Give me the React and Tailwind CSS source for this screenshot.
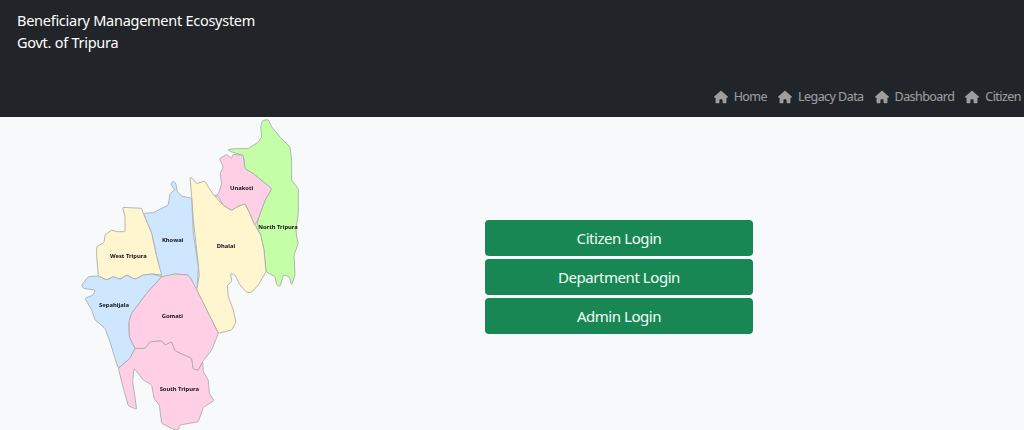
import React from "react";
import { FaHouse } from "react-icons/fa6";

// Closed outline with straight runs and slightly rounded corners.
const outline = (s) => {
  const p = s.trim().split(/\s+/).map((q) => q.split(",").map(Number));
  const toward = (a, b) => {
    const len = Math.hypot(b[0] - a[0], b[1] - a[1]);
    const t = Math.min(4 / len, 0.5);
    return [a[0] + (b[0] - a[0]) * t, a[1] + (b[1] - a[1]) * t];
  };
  let d = "";
  p.forEach((pt, i) => {
    const a = toward(pt, p[(i - 1 + p.length) % p.length]);
    const b = toward(pt, p[(i + 1) % p.length]);
    d += `${i ? "L" : "M"}${a[0]} ${a[1]} Q${pt[0]} ${pt[1]} ${b[0]} ${b[1]} `;
  });
  return d + "Z";
};

const regions = [
  ["#c4ffa8", "502,119 525,116 565,116 595,96 605,81 602,51 608,31 625,29 635,51 660,81 690,111 695,151 695,211 715,236 715,311 708,356 710,381 715,400 702,435 705,495 695,525 688,500 670,495 660,530 650,525 645,500 618,485 612,420 602,375 590,352 595,326 615,271 635,236 580,191 555,176 550,136 515,126"],
  ["#fff5cf", "390,201 398,206 410,221 435,213 445,231 462,256 490,286 515,301 530,291 555,281 570,311 585,346 602,375 612,420 618,485 595,525 575,547 560,547 540,525 525,495 512,490 515,515 502,525 505,560 520,600 528,637 515,660 475,670 410,540 418,495 410,420 400,330 395,260"],
  ["#ffcfe6", "478,146 500,133 515,146 518,133 550,136 555,176 580,191 635,236 615,271 595,326 585,346 570,311 555,281 530,291 515,301 490,286 475,261 462,256 475,254 485,221 480,191 490,171"],
  ["#cfe6ff", "250,310 280,308 325,285 330,250 345,240 332,222 340,212 348,222 352,245 365,258 395,265 400,370 415,470 412,530 405,535 395,510 385,495 345,492 305,505 290,440 275,370"],
  ["#fff5cf", "188,292 245,295 250,310 275,370 290,440 305,495 278,492 250,495 225,508 200,495 180,508 160,500 140,510 115,498 110,440 110,410 132,398 135,375 155,360 170,365 195,365 195,320"],
  ["#cfe6ff", "65,525 85,500 115,498 140,510 160,500 180,508 200,495 225,508 250,495 278,492 305,500 260,550 215,610 207,635 208,680 225,715 210,745 175,775 165,745 150,695 135,655 105,630 95,600 75,565 100,555 105,540 70,535"],
  ["#ffcfe6", "225,715 255,715 270,695 305,692 315,705 335,695 345,722 395,745 400,778 415,780 428,755 430,785 445,810 448,850 462,872 430,892 415,935 360,945 355,960 345,960 305,940 298,885 282,865 275,825 250,810 222,775 218,815 230,898 205,888 190,835 175,775 210,745"],
  ["#ffcfe6", "305,500 345,492 385,495 395,510 408,535 475,670 455,720 428,755 415,780 400,778 395,745 345,722 335,695 315,705 305,692 270,695 255,715 225,715 208,680 207,635 215,610 260,550"],
];

const labels = [
  ["Unakoti", 545, 233],
  ["North Tripura", 654, 352],
  ["Khowai", 338, 390],
  ["Dhalai", 498, 408],
  ["West Tripura", 205, 438],
  ["Sepahijala", 162, 585],
  ["Gomati", 337, 617],
  ["South Tripura", 358, 837],
];

const navItems = ["Home", "Legacy Data", "Dashboard", "Citizen"];
const logins = ["Citizen Login", "Department Login", "Admin Login"];

export default function App() {
  return (
    <div className="h-[430px] w-[1024px] overflow-hidden bg-[#f8f9fa] font-['Noto_Sans',sans-serif]">
      <header className="flex h-[117px] flex-col justify-between bg-[#212529] pb-[12px] pl-[17px] pt-[9px]">
        <div className="text-[14.5px] leading-[22px] tracking-[-0.27px] text-white">
          <div>Beneficiary Management Ecosystem</div>
          <div>Govt. of Tripura</div>
        </div>
        <nav className="flex justify-end gap-[11px] pr-[3px] text-[12.5px] leading-[16px] tracking-[-0.55px] text-white/55">
          {navItems.map((item) => (
            <a key={item} className="flex items-center gap-[6px]">
              <FaHouse className="text-[14px]" />
              {item}
            </a>
          ))}
        </nav>
      </header>
      <main className="flex">
        <div className="w-[485px] pl-[60px]">
          <svg width="260" height="313" viewBox="0 21 780 939" className="blur-[0.35px]">
            {regions.map(([fill, pts], i) => (
              <path key={i} d={outline(pts)} fill={fill} stroke="#a3aaa6" strokeWidth="2.5" strokeLinejoin="round" />
            ))}
            {labels.map(([text, x, y]) => (
              <text key={text} x={x} y={y + 6} textAnchor="middle" fontSize="17.5" fontWeight="700" fill="#111" fontFamily="'Noto Sans', sans-serif">
                {text}
              </text>
            ))}
          </svg>
        </div>
        <div className="mt-[103px] flex h-fit w-[268px] flex-col gap-[3px]">
          {logins.map((label) => (
            <button key={label} className="h-[36px] rounded-[4px] bg-[#198754] text-[15px] tracking-[-0.45px] text-[#f0fff6]">
              {label}
            </button>
          ))}
        </div>
      </main>
    </div>
  );
}
